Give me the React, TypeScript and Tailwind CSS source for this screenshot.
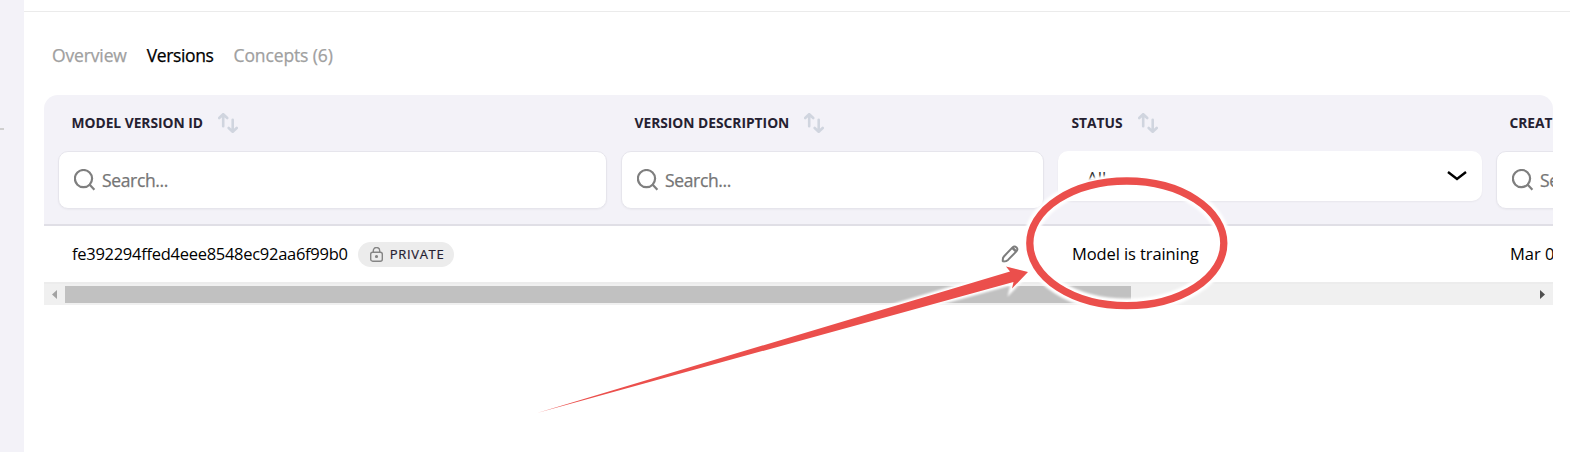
import type { ReactNode } from "react";

const SortIcon = () => (
  <svg width="20" height="20" viewBox="0 0 20 20" fill="none" stroke="#d0d5df" strokeWidth="2.6" strokeLinecap="round" strokeLinejoin="round">
    <path d="M1.2 5 5.2 1.2 9.2 5M5.2 1.6V13.2M14.7 6.8v11.6M10.7 15l4 3.8 4-3.8" />
  </svg>
);

const SearchIcon = () => (
  <svg className="shrink-0" width="22" height="22" viewBox="0 0 22 22" fill="none" stroke="#7f7f7f" strokeWidth="2.2">
    <circle cx="9.5" cy="9.6" r="8.6" />
    <path d="m15.2 15.3 5.2 5.4" />
  </svg>
);

const SearchBox = () => (
  <div className="flex h-[58px] items-center rounded-[10px] border border-[#e6e5ec] bg-white pl-[15px] shadow-[0_1px_2px_rgba(0,0,0,0.04)]">
    <SearchIcon />
    <span className="ml-[6px] text-[17.5px] font-medium tracking-[-0.35px] text-[#757575] [-webkit-text-stroke:0.25px_#757575]">Search...</span>
  </div>
);

const HeaderCell = ({ title, width, children }: { title: string; width: string; children: ReactNode }) => (
  <div className={`${width} shrink-0`}>
    <div className="flex h-[56px] items-center gap-[15px] pl-[13.5px]">
      <span className="text-[13.8px] font-bold tracking-[-0.02px] whitespace-nowrap text-[#252131]">{title}</span>
      <SortIcon />
    </div>
    {children}
  </div>
);

const Annotation = () => (
  <svg className="pointer-events-none absolute inset-0" width="1570" height="452" viewBox="0 0 1570 452" fill="none">
    <defs>
      <filter id="glow" x="-10%" y="-20%" width="120%" height="140%">
        <feGaussianBlur stdDeviation="1.2" />
      </filter>
    </defs>
    <g filter="url(#glow)" stroke="#fff">
      <ellipse cx="1126.8" cy="243.3" rx="97" ry="62.3" strokeWidth="14" />
      <path d="M537 413 1010 271.5 1006 266.5 1028 272 1012 288.5 1013.5 282Z" fill="#fff" strokeWidth="5" />
    </g>
    <ellipse cx="1126.8" cy="243.3" rx="97" ry="62.3" stroke="#eb4f4c" strokeWidth="7.3" />
    <path d="M537 413 1010 271.5 1006 266.5 1028 272 1012 288.5 1013.5 282Z" fill="#eb4f4c" />
  </svg>
);

export default function App() {
  return (
    <div className="relative flex h-[452px] w-[1570px] overflow-hidden bg-white font-['Open_Sans','Noto_Sans',sans-serif]">
      <aside className="w-6 shrink-0 bg-[#f3f2f8] pt-[128px]">
        <div className="h-[2px] w-1 bg-[#cfcfcf]" />
      </aside>
      <main className="min-w-0 flex-1">
        <div className="h-3 border-b border-[#ebebeb]" />
        <nav className="flex h-[83px] items-center gap-5 pt-1 pl-7 text-[17.5px] font-medium whitespace-nowrap text-[#a0a0a0] [-webkit-text-stroke:0.25px_currentColor]">
          <span className="tracking-[-0.14px]">Overview</span>
          <span className="tracking-[-0.38px] text-black">Versions</span>
          <span className="tracking-[-0.12px]">Concepts (6)</span>
        </nav>
        <section className="ml-5 w-[1509px] overflow-hidden rounded-t-[14px]">
          <div className="flex h-[131px] gap-[14px] border-b-2 border-[#e0dfe6] bg-[#f3f2f8] pl-[14px]">
            <HeaderCell title="MODEL VERSION ID" width="w-[549px]"><SearchBox /></HeaderCell>
            <HeaderCell title="VERSION DESCRIPTION" width="w-[423px]"><SearchBox /></HeaderCell>
            <HeaderCell title="STATUS" width="w-[424px]">
              <div className="flex h-[50px] items-center justify-between rounded-[10px] bg-white pr-[15px] pl-[29px] shadow-[0_1px_2px_rgba(0,0,0,0.05)]">
                <span className="pt-1 text-[17px] text-[#333]">All</span>
                <svg width="20" height="10" viewBox="0 0 20 10" fill="none" stroke="#000" strokeWidth="2.4"><path d="m1 1 9 7 9-7" /></svg>
              </div>
            </HeaderCell>
            <HeaderCell title="CREATED AT" width="w-[424px]"><SearchBox /></HeaderCell>
          </div>
          <div className="flex h-[56px] items-center gap-[14px] pl-[14px] text-[16.5px] whitespace-nowrap text-black">
            <div className="flex w-[549px] shrink-0 items-center pl-[14px]">
              <span className="tracking-[-0.28px]">fe392294ffed4eee8548ec92aa6f99b0</span>
              <span className="ml-[10px] flex h-[25px] w-24 items-center rounded-full bg-[#ececec] pl-3">
                <svg width="13" height="15" viewBox="0 0 13 15" fill="none" stroke="#858585" strokeWidth="1.4">
                  <rect x=".7" y="5.2" width="11.6" height="9" rx="2" />
                  <path d="M3.3 5V3.7a3.2 3.2 0 0 1 6.4 0V5" />
                  <circle cx="6.5" cy="9.5" r=".9" fill="#858585" />
                </svg>
                <span className="ml-[7px] pt-px text-[13px] font-medium tracking-[0.7px] text-[#252131] [-webkit-text-stroke:0.2px_#252131]">PRIVATE</span>
              </span>
            </div>
            <div className="flex w-[423px] shrink-0 justify-end pr-[25px]">
              <svg width="18" height="18" viewBox="0 0 18 18" fill="none" stroke="#7d7d7d" strokeWidth="2" strokeLinejoin="round">
                <path d="M1.8 16.3c-.2-2 .2-3.8 1.1-4.8L11.3 2.6c1.3-1.3 3-1.3 4.2-.2 1.1 1.2 1.1 2.7-.1 4L7 14.9c-1.3 1.2-3 1.7-5.2 1.4Z" />
                <path d="m11.300 2.800 4 3.800" strokeWidth="2.600" />
              </svg>
            </div>
            <div className="w-[424px] shrink-0 pl-[14px] tracking-[-0.1px]">Model is training</div>
            <div className="w-[424px] shrink-0 pl-[14px]">Mar 08, 2023</div>
          </div>
          <div className="flex h-[23px] items-start border-t-2 border-[#ececec] bg-[#f0f0f0] pt-[2px]">
            <svg className="shrink-0" width="21" height="17" viewBox="0 0 21 17"><path d="M13 4v9L8 8.5Z" fill="#a3a3a3" /></svg>
            <div className="h-[17px] w-[1066px] bg-[#c1c1c1]" />
            <svg className="ml-auto" width="17" height="17" viewBox="0 0 17 17"><path d="M4 4v9l5-4.5Z" fill="#505050" /></svg>
          </div>
        </section>
      </main>
      <Annotation />
    </div>
  );
}
